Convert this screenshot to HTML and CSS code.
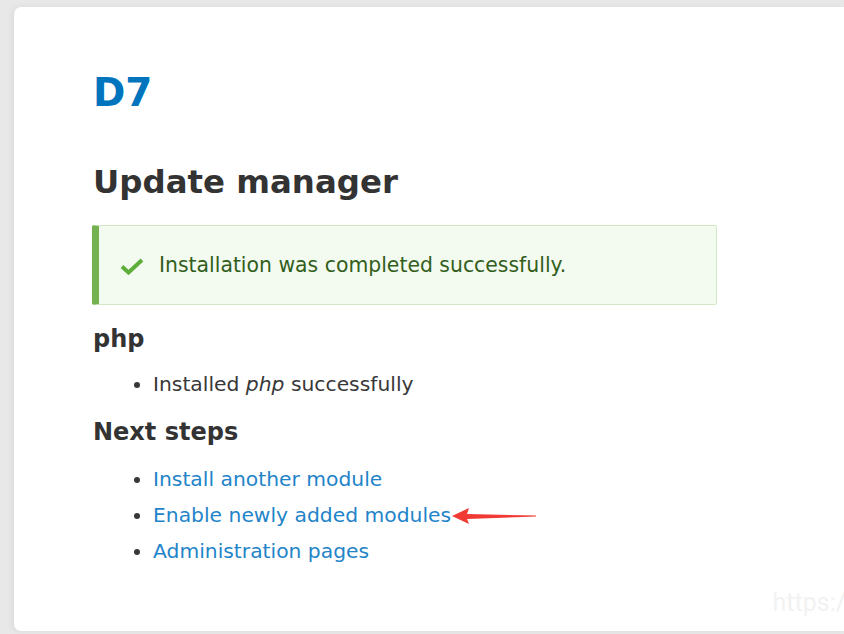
FILE: index.html
```html
<!DOCTYPE html>
<html>
<head>
<meta charset="utf-8">
<link rel="stylesheet" href="styles.css">
</head>
<body>
<div class="page">
  <main class="card">
    <div class="site-name">D7</div>
    <h1 class="title">Update manager</h1>
    <div class="messages">
      <svg class="check" width="24" height="18" viewBox="0 0 24 18"><path d="M2 9.5 L8.5 15.5 L22 3" fill="none" stroke="#5eae3c" stroke-width="4"/></svg>
      <span>Installation was completed successfully.</span>
    </div>
    <h2 class="sub">php</h2>
    <ul class="list">
      <li>Installed <em>php</em> successfully</li>
    </ul>
    <h2 class="sub sub2">Next steps</h2>
    <ul class="list links">
      <li><a href="#">Install another module</a></li>
      <li class="arrowed"><a href="#">Enable newly added modules</a>
        <svg class="arrow" width="90" height="20" viewBox="0 0 90 20"><path d="M1 10 L18 2 L16 8 L85 9.5 L85 10.5 L16 13 L18 18 Z" fill="#f03a33"/></svg>
      </li>
      <li><a href="#">Administration pages</a></li>
    </ul>
  </main>
  <div class="watermark">https:/</div>
</div>
</body>
</html>
```
FILE: styles.css
```css
html, body {
  margin: 0;
  padding: 0;
  height: 100%;
  overflow: hidden;
}
body {
  background: #e8e8e8;
  font-family: "DejaVu Sans", sans-serif;
  color: #383838;
}
.page {
  position: relative;
  padding: 7px 0 3px 14px;
  height: 624px;
}
.card {
  background: #fff;
  border-radius: 7px 0 0 7px;
  box-shadow: -2px 0 6px rgba(0,0,0,0.06);
  height: 100%;
  padding: 61px 0 0 79px;
  box-sizing: border-box;
}
.site-name {
  color: #0074bd;
  font-weight: bold;
  font-size: 39px;
  line-height: 50px;
}
.title {
  margin: 44px 0 0 0;
  font-size: 32.4px;
  line-height: 40px;
  font-weight: bold;
  color: #333;
}
.messages {
  margin: 23px 0 0 -1px;
  width: 596px;
  height: 78px;
  box-sizing: content-box;
  border: 1px solid #d2e7c6;
  border-left: 7px solid #74b251;
  border-radius: 2px;
  background: #f3faef;
  color: #325e1c;
  font-size: 20.4px;
  display: flex;
  align-items: center;
  gap: 15px;
  padding: 0 0 0 21px;
}
.check { flex: none; margin-top: 1px; }
.sub {
  margin: 20px 0 0 0;
  font-size: 24px;
  line-height: 28px;
  font-weight: bold;
  color: #333;
}
.sub2 { margin-top: 16px; }
.list {
  margin: 13px 0 0 0;
  padding: 0 0 0 60px;
  font-size: 20.3px;
  line-height: 36px;
}
.links { margin-top: 15px; }
.links a {
  color: #1f84c9;
  text-decoration: none;
}
.arrowed { position: relative; }
.arrow {
  position: absolute;
  margin-left: 0;
  margin-top: 9px;
}
.watermark {
  position: absolute;
  right: -2px;
  top: 588px;
  font-family: "Roboto", sans-serif;
  font-size: 25px;
  color: #f2f2f2;
}
```
